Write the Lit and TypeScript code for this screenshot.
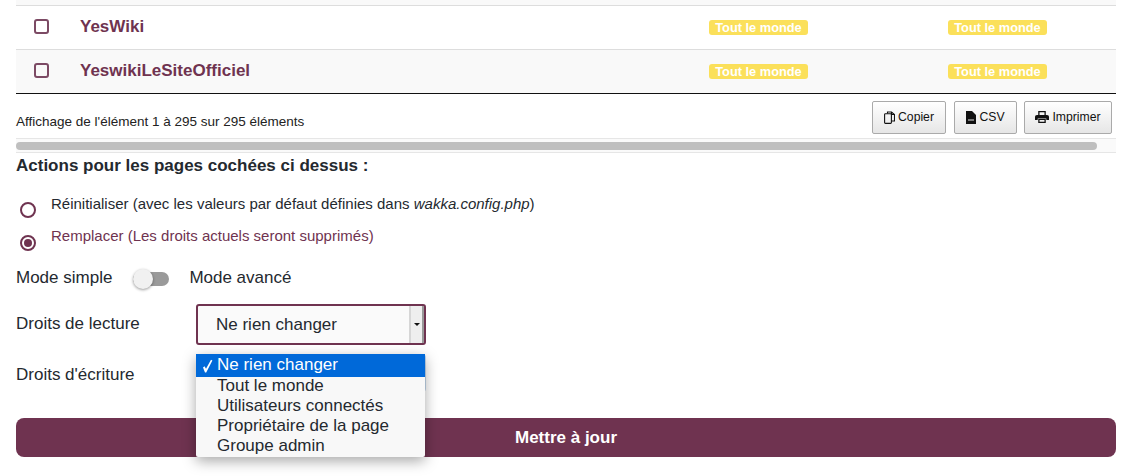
import { LitElement, html, css } from "lit";
import { customElement } from "lit/decorators.js";

@customElement("app-root")
export class AppRoot extends LitElement {
  static styles = css`
    :host { display: block; width: 1135px; height: 476px; overflow: hidden; background: #fff; box-sizing: border-box; padding: 0 19px 0 16px; font-family: "Liberation Sans", Arial, sans-serif; color: #24292f; position: relative; }
    .top { height: 5px; background: #f9f9f9; border-bottom: 1px solid #ddd; }
    .row { height: 43px; display: grid; grid-template-columns: 64px 629px 239px 1fr; align-items: center; border-bottom: 1px solid #ddd; }
    .row.alt { background: #f9f9f9; border-bottom: 1px solid #111; }
    .cb { width: 15px; height: 15px; margin: 0 0 2px 18px; border: 2px solid #7c4a64; border-radius: 3px; box-sizing: border-box; }
    .name { font-size: 17px; font-weight: 700; color: #6f3350; margin-bottom: 2px; }
    .badge { justify-self: start; width: 99px; text-align: center; background: #fbe05a; color: #fff; font-size: 12.8px; font-weight: 700; line-height: 15px; border-radius: 3px; }
    .info { height: 45px; display: flex; align-items: center; justify-content: space-between; border-bottom: 1px solid #e6e6e6; box-sizing: border-box; font-size: 13.5px; color: #222; }
    .info > span { margin-top: 10px; }
    .btns { display: flex; gap: 7px; padding-right: 4px; margin-top: 2px; }
    .btn { height: 33px; display: flex; align-items: center; justify-content: center; gap: 3px; box-sizing: border-box; border: 1px solid #aaa; border-radius: 2px; background: linear-gradient(#fff, #e6e6e6); color: #111; font-size: 12.2px; }
    .b1 { width: 74px; margin-right: 1px; } .b2 { width: 63px; } .b3 { width: 88px; }
    .bar { height: 14px; border-bottom: 1px solid #e6e6e6; background: #fafafa; box-sizing: border-box; padding-top: 3px; }
    .thumb { height: 8px; width: 1081px; background: #bfbfbf; border-radius: 4px; }
    h3 { margin: 4px 0 0; font-size: 17px; line-height: 18px; font-weight: 700; color: #24292f; }
    .radio { display: flex; font-size: 15px; line-height: 16px; }
    .radio.r1 { margin-top: 21px; }
    .radio.r2 { color: #6f3350; margin-top: 10px; }
    .dot { width: 16px; height: 16px; margin: 6px 15px 0 4px; flex: none; border: 2px solid #6f3350; border-radius: 50%; box-sizing: border-box; position: relative; }
    .dot.on { margin-top: 7px; }
    .on::after { content: ""; position: absolute; inset: 2px; border-radius: 50%; background: #6f3350; }
    .mode { display: flex; align-items: center; margin-top: 17px; height: 20px; font-size: 17px; }
    .sw { width: 36px; height: 14px; margin: 2px 20px 0 21px; background: #9a9a9a; border-radius: 7px; position: relative; }
    .sw::after { content: ""; position: absolute; left: 0; top: -3px; width: 20px; height: 20px; border-radius: 50%; background: #f1f1f1; box-shadow: 0 1px 3px rgba(0,0,0,.4); }
    .field { display: grid; grid-template-columns: 180px 230px; font-size: 17px; line-height: 18px; }
    .f1 { margin-top: 16px; }
    .f1 > span { padding-top: 11px; }
    .f2 { margin-top: 9px; }
    .f2 > span { padding-top: 12px; }
    .sel { height: 41px; box-sizing: border-box; border: 2px solid #6f3350; border-radius: 3px; background: #fafafa; display: flex; align-items: center; justify-content: space-between; padding-left: 18px; font-size: 17px; }
    .arr { width: 15px; height: 100%; background: #eee; border-left: 2px solid #d6d6d6; border-right: 2px solid #999; box-sizing: border-box; display: flex; align-items: center; justify-content: center; }
    .arr::after { content: ""; border: 3px solid transparent; border-top: 3px solid #111; border-bottom: 0; }
    .sel2 { border-color: #c5d9ee; border-width: 1px; height: 38px; }
    .submit { margin-top: 26px; height: 39px; background: #6f3350; color: #fff; border-radius: 8px; display: flex; align-items: center; justify-content: center; font-size: 17px; font-weight: 700; }
    .menu { position: absolute; left: 196px; top: 354px; width: 229px; background: #f8f8f8; box-shadow: 0 4px 14px rgba(0,0,0,.35); font-size: 17px; line-height: 20px; color: #24292f; border-radius: 2px; padding-bottom: 1px; }
    .opt { padding-left: 21px; position: relative; }
    .opt.sel-on { background: #0069d9; color: #fff; height: 23px; line-height: 22px; margin-bottom: -1px; }
    .chk { position: absolute; left: 6px; top: 5px; }
    svg { display: block; flex: none; }
  `;

  row(name: string, alt = false) {
    return html`<div class="row ${alt ? "alt" : ""}">
      <div class="cb"></div><div class="name">${name}</div>
      <div class="badge">Tout le monde</div><div class="badge">Tout le monde</div>
    </div>`;
  }

  render() {
    return html`
      <div class="top"></div>
      ${this.row("YesWiki")}
      ${this.row("YeswikiLeSiteOfficiel", true)}
      <div class="info">
        <span>Affichage de l'élément 1 à 295 sur 295 éléments</span>
        <div class="btns">
          <div class="btn b1"><svg width="11" height="13" viewBox="0 0 11 13" fill="none" stroke="#111" stroke-width="1.1"><path d="M3.500 2.500V1h4l3 2.500V10H7.500"/><path d="M7.500 1v2.500H10.500"/><rect x=".6" y="2.800" width="6.800" height="9.600" rx=".8"/></svg>Copier</div>
          <div class="btn b2"><svg width="10" height="13" viewBox="0 0 10 13"><path d="M0 0h6l4 4v9H0z" fill="#111"/><rect x="2" y="8" width="6" height="2" fill="#777"/></svg>CSV</div>
          <div class="btn b3"><svg width="14" height="12" viewBox="0 0 13 12" fill="#111" preserveAspectRatio="none"><path d="M3 0h7v4H8.800V1.200H4.200V4H3z"/><path d="M1.800 4h9.400A1.800 1.800 0 0 1 13 5.800V9h-2.500V7.500h-8V9H0V5.800A1.800 1.800 0 0 1 1.800 4z"/><path d="M3 8h7v4H3zm1.200 1.100v1.700h4.600V9.100z" fill-rule="evenodd"/></svg>Imprimer</div>
        </div>
      </div>
      <div class="bar"><div class="thumb"></div></div>
      <h3>Actions pour les pages cochées ci dessus :</h3>
      <div class="radio r1"><span class="dot"></span><span>Réinitialiser (avec les valeurs par défaut définies dans <i>wakka.config.php</i>)</span></div>
      <div class="radio r2"><span class="dot on"></span><span>Remplacer (Les droits actuels seront supprimés)</span></div>
      <div class="mode"><span>Mode simple</span><span class="sw"></span><span>Mode avancé</span></div>
      <div class="field f1"><span>Droits de lecture</span><div class="sel"><span>Ne rien changer</span><span class="arr"></span></div></div>
      <div class="field f2"><span>Droits d'écriture</span><div class="sel sel2"></div></div>
      <div class="submit">Mettre à jour</div>
      <div class="menu">
        <div class="opt sel-on"><svg class="chk" width="11" height="14" viewBox="0 0 11 14"><path d="M1 8.500l1.500-1.300 1.500 2.600L9 .8l1.400.7L4.200 13.500H3z" fill="#fff"/></svg>Ne rien changer</div>
        <div class="opt">Tout le monde</div>
        <div class="opt">Utilisateurs connectés</div>
        <div class="opt">Propriétaire de la page</div>
        <div class="opt">Groupe admin</div>
      </div>
    `;
  }
}
